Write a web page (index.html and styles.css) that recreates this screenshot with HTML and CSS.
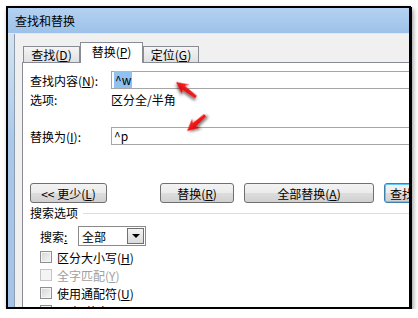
FILE: index.html
```html
<!DOCTYPE html>
<html lang="zh-CN">
<head>
    <meta charset="UTF-8">
    <title>查找和替换</title>
    <link rel="stylesheet" href="styles.css">
</head>
<body>
    <div class="window">
        <div class="titlebar">查找和替换</div>
        <div class="frame">
            <div class="edge"></div>
            <div class="dialog">
                <div class="tabs">
                    <div class="tab first">查找(<u>D</u>)</div>
                    <div class="tab active">替换(<u>P</u>)</div>
                    <div class="tab last">定位(<u>G</u>)</div>
                </div>
                <div class="panel">
                    <div class="field">
                        <span class="label">查找内容(<u>N</u>):</span>
                        <div class="input"><span class="selected">^w</span></div>
                    </div>
                    <div class="field info">
                        <span class="label">选项:</span>
                        <span>区分全/半角</span>
                    </div>
                    <div class="field replace">
                        <span class="label">替换为(<u>I</u>):</span>
                        <div class="input">^p</div>
                    </div>
                    <div class="buttons">
                        <button class="btn less">&lt;&lt; 更少(<u>L</u>)</button>
                        <button class="btn replace-one">替换(<u>R</u>)</button>
                        <button class="btn replace-all">全部替换(<u>A</u>)</button>
                        <button class="btn find-next">查找下一处(<u>F</u>)</button>
                    </div>
                    <div class="group">搜索选项</div>
                    <div class="search-row">
                        <span class="search-label">搜索<u>:</u></span>
                        <div class="select">
                            <span>全部</span>
                            <div class="drop"><span class="caret"></span></div>
                        </div>
                    </div>
                    <div class="check"><span class="box"></span>区分大小写(<u>H</u>)</div>
                    <div class="check disabled"><span class="box"></span>全字匹配(<u>Y</u>)</div>
                    <div class="check"><span class="box"></span>使用通配符(<u>U</u>)</div>
                    <div class="check"><span class="box"></span>同音(英文)(<u>K</u>)</div>
                </div>
            </div>
        </div>
    </div>

    <!-- red pointer arrows drawn over the dialog -->
    <svg class="arrows" width="418" height="318" viewBox="0 0 418 318">
        <defs>
            <filter id="shade" x="-50%" y="-50%" width="200%" height="200%">
                <feDropShadow dx="1" dy="2" stdDeviation="1.4" flood-color="#000" flood-opacity="0.6"/>
            </filter>
            <linearGradient id="red" x1="0" y1="0" x2="0" y2="1">
                <stop offset="0" stop-color="#ff2a2a"/>
                <stop offset="1" stop-color="#d80000"/>
            </linearGradient>
        </defs>
        <polygon transform="translate(176 82) rotate(37)" filter="url(#shade)" fill="url(#red)"
                 points="0,0 12,-6 9.5,-2.2 25,-1.4 25,1.4 9.5,2.2 12,6"/>
        <polygon transform="translate(187 131) rotate(-41)" filter="url(#shade)" fill="url(#red)"
                 points="0,0 12,-6 9.5,-2.2 24,-1.4 24,1.4 9.5,2.2 12,6"/>
    </svg>
</body>
</html>
```

FILE: styles.css
```css
body {
    margin: 0;
    background: #fff;
    font-family: "Noto Sans CJK SC", "Noto Sans", sans-serif;
    font-size: 12px;
    color: #000;
}

.window {
    margin: 6px 0 0 6px;
    width: 401px;
    height: 299px;
    border: 2px solid #000;
    box-shadow: 1px 1px 0 #000, 2px 3px 5px rgba(0, 0, 0, 0.45);
    overflow: hidden;
    display: flex;
    flex-direction: column;
    background: #f0f0f0;
}

.titlebar {
    flex: none;
    height: 25px;
    line-height: 25px;
    padding-left: 7px;
    background: linear-gradient(#b4d2f1, #9dc1e8);
    border-bottom: 1px solid #dbe8f5;
}

.frame {
    flex: 1;
    display: flex;
    min-height: 0;
}

.edge {
    flex: none;
    width: 6px;
    background: linear-gradient(#d7e3ef, #a9c8ea 40%, #a3c4e8);
    border-right: 1px solid #8d9db0;
}

.dialog {
    flex: 1;
    padding: 8px 0 0 7px;
    overflow: hidden;
}

.tabs {
    display: flex;
    align-items: flex-end;
    margin-left: 1px;
    height: 20px;
}

.tab {
    box-sizing: border-box;
    height: 16px;
    line-height: 15px;
    border: 1px solid #898c95;
    border-bottom: none;
    background: linear-gradient(#f4f4f4, #e1e1e1);
    text-align: center;
}

.tab.first {
    width: 57px;
}

.tab.active {
    width: 63px;
    height: 21px;
    line-height: 17px;
    margin-bottom: -1px;
    background: #fff;
    position: relative;
    z-index: 1;
}

.tab.last {
    width: 56px;
}

.panel {
    width: 440px;
    height: 300px;
    border-top: 1px solid #898c95;
    border-left: 1px solid #898c95;
    background: #fff;
    padding: 8px 0 0 7px;
}

.field {
    display: flex;
    align-items: center;
    height: 18px;
}

.field.info {
    margin-top: 1px;
}

.field.replace {
    margin-top: 19px;
}

.label {
    flex: none;
    width: 81px;
}

.input {
    box-sizing: border-box;
    flex: 1;
    height: 18px;
    line-height: 15px;
    border: 1px solid #a5a5a5;
    padding-left: 2px;
}

.selected {
    background: #8fc2f0;
    padding: 0 1px;
}

.buttons {
    display: flex;
    margin-top: 38px;
}

.btn {
    flex: none;
    box-sizing: border-box;
    height: 20px;
    padding: 0;
    border: 1px solid #707070;
    border-radius: 3px;
    background: linear-gradient(#f3f3f3 0%, #ebebeb 50%, #dddddd 51%, #d0d0d0 100%);
    font-family: inherit;
    font-size: 12px;
    color: #000;
}

.btn.less {
    width: 77px;
    margin-right: 53px;
}

.btn.replace-one {
    width: 74px;
    margin-right: 10px;
}

.btn.replace-all {
    width: 130px;
    margin-right: 10px;
}

.btn.find-next {
    width: 130px;
    border-color: #3c7fb1;
    box-shadow: inset 0 0 0 1px #5ec9f5;
    text-align: left;
    padding-left: 5px;
}

.group {
    display: flex;
    align-items: center;
    height: 14px;
    line-height: 14px;
    margin-top: 3px;
}

.group::after {
    content: "";
    flex: 1;
    border-top: 1px solid #d5dfe5;
    margin-left: 5px;
}

.search-row {
    display: flex;
    align-items: center;
    height: 20px;
    margin-top: 6px;
    padding-left: 10px;
}

.search-label {
    width: 38px;
}

.select {
    box-sizing: border-box;
    width: 68px;
    height: 20px;
    border: 1px solid #8a8a8a;
    display: flex;
    align-items: center;
    justify-content: space-between;
    padding-left: 3px;
}

.drop {
    box-sizing: border-box;
    width: 17px;
    height: 16px;
    margin-right: 1px;
    border: 1px solid #707070;
    background: linear-gradient(#f4f4f4, #dadada);
    display: flex;
    align-items: center;
    justify-content: center;
}

.caret {
    width: 0;
    height: 0;
    border-left: 4px solid transparent;
    border-right: 4px solid transparent;
    border-top: 4px solid #000;
}

.check {
    display: flex;
    align-items: center;
    height: 18px;
    padding-left: 10px;
}

.search-row + .check {
    margin-top: 2px;
}

.box {
    box-sizing: border-box;
    width: 12px;
    height: 12px;
    margin-right: 5px;
    border: 1px solid #8e8f8f;
    background: linear-gradient(135deg, #d6d6d6, #f6f6f6);
    box-shadow: inset 0 0 0 1px #f4f4f4;
}

.check.disabled {
    color: #a0a0a0;
}

.check.disabled .box {
    border-color: #c5c5c5;
    background: #f4f4f4;
}

.arrows {
    position: absolute;
    left: 0;
    top: 0;
    pointer-events: none;
}
```
